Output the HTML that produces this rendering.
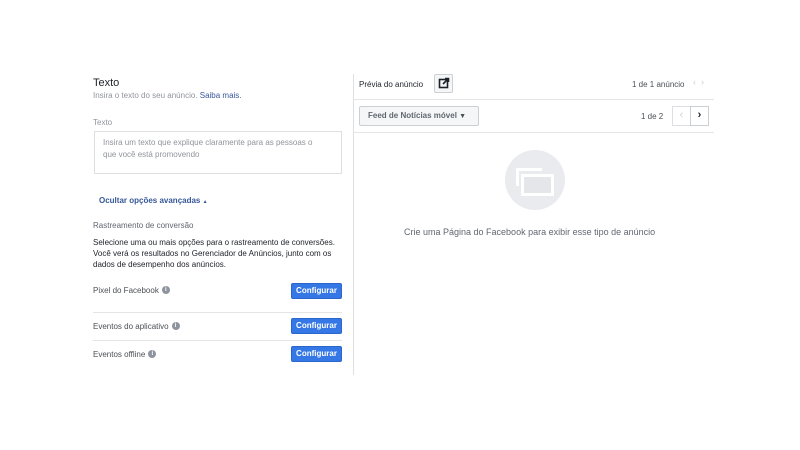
<!DOCTYPE html>
<html><head><meta charset="utf-8"><style>
*{margin:0;padding:0;box-sizing:border-box}
body{width:800px;height:450px;background:#fff;font-family:"Liberation Sans",Arial,sans-serif;position:relative;overflow:hidden;color:#1d2129}
.a{position:absolute;white-space:nowrap}
.btn{position:absolute;left:291px;width:51px;height:16px;background:#3578e5;border:1px solid #2a66cc;border-radius:2px;color:#fff;font-size:8px;font-weight:bold;text-align:center;line-height:14px}
.i{display:inline-block;width:8px;height:8px;border-radius:50%;background:#8d949e;color:#fff;font-size:6px;line-height:8px;text-align:center;font-weight:bold;vertical-align:middle;margin-left:3px;margin-top:-2px}
.lab{font-size:8px;color:#4b4f56}
.hr{position:absolute;height:1px;background:#e5e5e5}
</style></head><body>
<div class="a" style="left:93px;top:77px;font-size:11px;color:#1d2129">Texto</div>
<div class="a" style="left:93px;top:91px;font-size:8px;color:#90949c">Insira o texto do seu anúncio. <span style="color:#365899">Saiba mais.</span></div>
<div class="a" style="left:93px;top:118px;font-size:8px;color:#90949c">Texto</div>
<div class="a" style="left:94px;top:131px;width:248px;height:43px;border:1px solid #dddfe2;white-space:normal;padding:5px 20px 5px 8px;font-size:8px;line-height:12px;color:#90949c">Insira um texto que explique claramente para as pessoas o que você está promovendo</div>
<div class="a" style="left:99px;top:196px;font-size:8px;color:#365899;font-weight:bold">Ocultar opções avançadas <span style="font-size:5px">▲</span></div>
<div class="a" style="left:93px;top:221px;font-size:8px;color:#606770">Rastreamento de conversão</div>
<div class="a" style="left:93px;top:237px;font-size:8px;line-height:11px;color:#1d2129">Selecione uma ou mais opções para o rastreamento de conversões.<br>Você verá os resultados no Gerenciador de Anúncios, junto com os<br>dados de desempenho dos anúncios.</div>
<div class="a lab" style="left:93px;top:286px">Pixel do Facebook<span class="i">i</span></div>
<div class="btn" style="top:283px">Configurar</div>
<div class="hr" style="left:93px;top:312px;width:249px"></div>
<div class="a lab" style="left:93px;top:322px">Eventos do aplicativo<span class="i">i</span></div>
<div class="btn" style="top:318px">Configurar</div>
<div class="hr" style="left:93px;top:340px;width:249px"></div>
<div class="a lab" style="left:93px;top:350px">Eventos offline<span class="i">i</span></div>
<div class="btn" style="top:346px">Configurar</div>

<div class="a" style="left:353px;top:74px;width:1px;height:301px;background:#dddfe2"></div>
<div class="hr" style="left:353px;top:99px;width:361px"></div>
<div class="a" style="left:359px;top:80px;font-size:8px">Prévia do anúncio</div>
<div class="a" style="left:434px;top:74px;width:19px;height:19px;border:1px solid #ccd0d5;border-radius:2px;background:#f5f6f7">
<svg width="17" height="17" viewBox="0 0 17 17" style="position:absolute;left:0;top:0"><rect x="4.5" y="4.5" width="8" height="8" fill="none" stroke="#1d2129" stroke-width="1.6"/><path d="M8 9 L13 4 M10 3.5 H13.5 V7" stroke="#1d2129" stroke-width="1.6" fill="none"/></svg></div>
<div class="a" style="left:632px;top:80px;font-size:8px;color:#4b4f56">1 de 1 anúncio</div>
<div class="a" style="left:693px;top:77px;font-size:9px;color:#ccd0d5">‹ &nbsp;›</div>
<div class="a" style="left:359px;top:106px;width:120px;height:20px;border:1px solid #ccd0d5;border-radius:2px;background:#f5f6f7;font-size:8px;font-weight:bold;color:#606770;padding-left:8px;line-height:18px">Feed de Notícias móvel <span style="font-size:7px;color:#4b4f56">▼</span></div>
<div class="a" style="left:641px;top:112px;font-size:8px;color:#4b4f56">1 de 2</div>
<div class="a" style="left:672px;top:106px;width:19px;height:20px;border:1px solid #dddfe2;background:#fff;color:#ccd0d5;font-size:11px;text-align:center;line-height:17px">‹</div>
<div class="a" style="left:690px;top:106px;width:19px;height:20px;border:1px solid #ccd0d5;background:#fff;color:#1d2129;font-size:11px;font-weight:bold;text-align:center;line-height:17px">›</div>
<div class="hr" style="left:353px;top:132px;width:361px"></div>
<div class="a" style="left:505px;top:150px;width:60px;height:60px;border-radius:50%;background:#e9ebee">
<div class="a" style="left:11px;top:18px;width:26px;height:18px;border:3px solid #fff;border-right:none;border-bottom:none"></div>
<div class="a" style="left:16px;top:24px;width:33px;height:22px;border:3px solid #fff;background:#e4e6e9"></div>
</div>
<div class="a" style="left:404px;top:227px;font-size:9px;color:#606770">Crie uma Página do Facebook para exibir esse tipo de anúncio</div>
</body></html>
